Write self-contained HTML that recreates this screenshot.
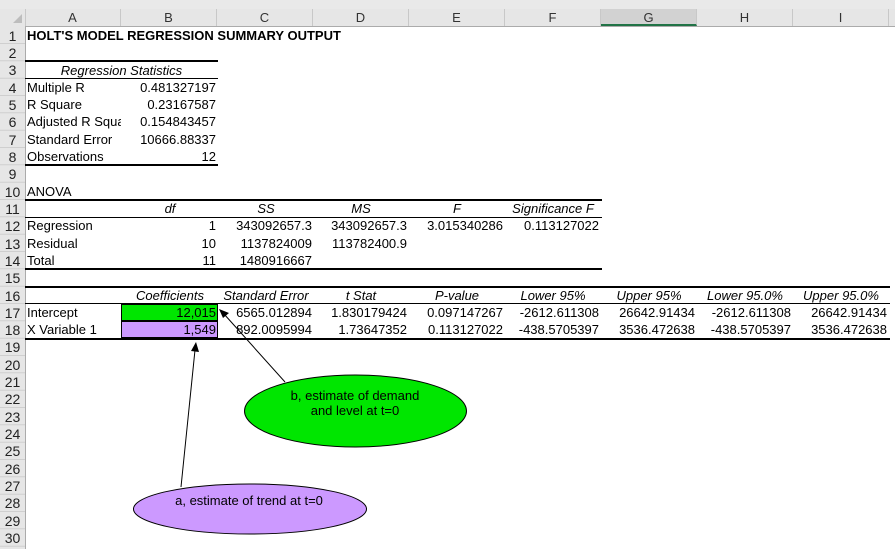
<!DOCTYPE html>
<html><head><meta charset="utf-8"><style>
*{margin:0;padding:0}
html,body{width:895px;height:549px;overflow:hidden}
body{position:relative;background:#fff;font-family:"Liberation Sans",Arial,sans-serif;color:#000}
.c{position:absolute;height:17px;line-height:18px;font-size:13px;white-space:nowrap;overflow:hidden;padding:0 2px;box-sizing:border-box;width:96px}
.r{text-align:right}.m{text-align:center}.i{font-style:italic}
.rn{position:absolute;left:0;width:25px;height:17px;line-height:18px;font-size:14px;text-align:center;background:#e6e6e6;color:#222;box-sizing:border-box}
.ch{position:absolute;top:9px;height:17px;line-height:18px;font-size:13px;text-align:center;color:#333;border-right:1px solid #c8c8c8;box-sizing:border-box;width:96px}
</style></head><body>
<div style="position:absolute;left:0;top:0;width:895px;height:9px;background:#e9e9e9"></div>
<div style="position:absolute;left:0;top:9px;width:895px;height:17px;background:#e6e6e6;border-bottom:1px solid #ababab"></div>
<div style="position:absolute;left:0;top:9px;width:25px;height:17px;border-right:1px solid #c8c8c8"></div>
<div style="position:absolute;left:13px;top:14px;width:0;height:0;border-left:9px solid transparent;border-bottom:9px solid #bdbdbd"></div>
<div class="ch" style="left:25px">A</div><div class="ch" style="left:121px">B</div><div class="ch" style="left:217px">C</div><div class="ch" style="left:313px">D</div><div class="ch" style="left:409px">E</div><div class="ch" style="left:505px">F</div>
<div class="ch" style="left:601px;background:#d2d2d2;border-bottom:2px solid #217346">G</div><div class="ch" style="left:697px">H</div><div class="ch" style="left:793px">I</div>
<div style="position:absolute;left:0;top:26px;width:25px;height:523px;background:#e6e6e6;border-right:1px solid #ababab"></div>
<div class="rn" style="top:26.5px">1</div><div class="rn" style="top:43.8px">2</div><div class="rn" style="top:61.2px">3</div><div class="rn" style="top:78.5px">4</div><div class="rn" style="top:95.8px">5</div><div class="rn" style="top:113.2px">6</div><div class="rn" style="top:130.5px">7</div><div class="rn" style="top:147.8px">8</div><div class="rn" style="top:165.1px">9</div><div class="rn" style="top:182.5px">10</div><div class="rn" style="top:199.8px">11</div><div class="rn" style="top:217.1px">12</div><div class="rn" style="top:234.5px">13</div><div class="rn" style="top:251.8px">14</div><div class="rn" style="top:269.1px">15</div><div class="rn" style="top:286.5px">16</div><div class="rn" style="top:303.8px">17</div><div class="rn" style="top:321.1px">18</div><div class="rn" style="top:338.4px">19</div><div class="rn" style="top:355.8px">20</div><div class="rn" style="top:373.1px">21</div><div class="rn" style="top:390.4px">22</div><div class="rn" style="top:407.8px">23</div><div class="rn" style="top:425.1px">24</div><div class="rn" style="top:442.4px">25</div><div class="rn" style="top:459.8px">26</div><div class="rn" style="top:477.1px">27</div><div class="rn" style="top:494.4px">28</div><div class="rn" style="top:511.8px">29</div><div class="rn" style="top:529.1px">30</div>
<svg style="position:absolute;left:0;top:0" width="25" height="549"><g stroke="#cfcfcf" stroke-width="1">
<path d="M0 43.5H25M0 60.8H25M0 78.2H25M0 95.5H25M0 112.8H25M0 130.2H25M0 147.5H25M0 164.8H25M0 182.2H25M0 199.5H25M0 216.8H25M0 234.2H25M0 251.5H25M0 268.8H25M0 286.2H25M0 303.5H25M0 320.8H25M0 338.2H25M0 355.5H25M0 372.8H25M0 390.2H25M0 407.5H25M0 424.8H25M0 442.2H25M0 459.5H25M0 476.8H25M0 494.2H25M0 511.5H25M0 528.8H25M0 546.2H25"/></g></svg>

<div style="position:absolute;left:121px;top:303.8px;width:97px;height:17.3px;background:#00e600;border:1px solid #000;box-sizing:border-box"></div>
<div style="position:absolute;left:121px;top:321.1px;width:97px;height:17.3px;background:#cc99ff;border:1px solid #000;box-sizing:border-box"></div>

<div style="position:absolute;left:25px;top:60px;width:193px;height:2px;background:#000"></div>
<div style="position:absolute;left:25px;top:78px;width:193px;height:1px;background:#000"></div>
<div style="position:absolute;left:25px;top:163.5px;width:193px;height:2px;background:#000"></div>
<div style="position:absolute;left:25px;top:198.5px;width:577px;height:2px;background:#000"></div>
<div style="position:absolute;left:25px;top:216.5px;width:577px;height:1px;background:#000"></div>
<div style="position:absolute;left:25px;top:267.5px;width:577px;height:2px;background:#000"></div>
<div style="position:absolute;left:25px;top:285.5px;width:865px;height:2px;background:#000"></div>
<div style="position:absolute;left:25px;top:303.3px;width:865px;height:1px;background:#000"></div>
<div style="position:absolute;left:25px;top:337.5px;width:865px;height:2px;background:#000"></div>

<div class="c" style="left:25px;top:26.5px;width:400px;font-weight:bold">HOLT'S MODEL REGRESSION SUMMARY OUTPUT</div>
<div class="c m i" style="left:25px;top:61.5px;width:193px">Regression Statistics</div>
<div class="c" style="left:25px;top:78.5px">Multiple R</div><div class="c r" style="left:122px;top:78.5px">0.481327197</div>
<div class="c" style="left:25px;top:95.8px">R Square</div><div class="c r" style="left:122px;top:95.8px">0.23167587</div>
<div class="c" style="left:25px;top:113.2px">Adjusted R Squa</div><div class="c r" style="left:122px;top:113.2px">0.154843457</div>
<div class="c" style="left:25px;top:130.5px">Standard Error</div><div class="c r" style="left:122px;top:130.5px">10666.88337</div>
<div class="c" style="left:25px;top:147.8px">Observations</div><div class="c r" style="left:122px;top:147.8px">12</div>

<div class="c" style="left:25px;top:182.5px">ANOVA</div>
<div class="c m i" style="left:122px;top:199.8px">df</div><div class="c m i" style="left:218px;top:199.8px">SS</div><div class="c m i" style="left:313px;top:199.8px">MS</div><div class="c m i" style="left:409px;top:199.8px">F</div><div class="c m i" style="left:505px;top:199.8px">Significance F</div>
<div class="c" style="left:25px;top:217.1px">Regression</div><div class="c r" style="left:122px;top:217.1px">1</div><div class="c r" style="left:218px;top:217.1px">343092657.3</div><div class="c r" style="left:313px;top:217.1px">343092657.3</div><div class="c r" style="left:409px;top:217.1px">3.015340286</div><div class="c r" style="left:505px;top:217.1px">0.113127022</div>
<div class="c" style="left:25px;top:234.5px">Residual</div><div class="c r" style="left:122px;top:234.5px">10</div><div class="c r" style="left:218px;top:234.5px">1137824009</div><div class="c r" style="left:313px;top:234.5px">113782400.9</div>
<div class="c" style="left:25px;top:251.8px">Total</div><div class="c r" style="left:122px;top:251.8px">11</div><div class="c r" style="left:218px;top:251.8px">1480916667</div>

<div class="c m i" style="left:122px;top:286.5px">Coefficients</div><div class="c m i" style="left:218px;top:286.5px">Standard Error</div><div class="c m i" style="left:313px;top:286.5px">t Stat</div><div class="c m i" style="left:409px;top:286.5px">P-value</div><div class="c m i" style="left:505px;top:286.5px">Lower 95%</div><div class="c m i" style="left:601px;top:286.5px">Upper 95%</div><div class="c m i" style="left:697px;top:286.5px">Lower 95.0%</div><div class="c m i" style="left:793px;top:286.5px">Upper 95.0%</div>
<div class="c" style="left:25px;top:303.8px">Intercept</div><div class="c r" style="left:122px;top:303.8px">12,015</div><div class="c r" style="left:218px;top:303.8px">6565.012894</div><div class="c r" style="left:313px;top:303.8px">1.830179424</div><div class="c r" style="left:409px;top:303.8px">0.097147267</div><div class="c r" style="left:505px;top:303.8px">-2612.611308</div><div class="c r" style="left:601px;top:303.8px">26642.91434</div><div class="c r" style="left:697px;top:303.8px">-2612.611308</div><div class="c r" style="left:793px;top:303.8px">26642.91434</div>
<div class="c" style="left:25px;top:321.1px">X Variable 1</div><div class="c r" style="left:122px;top:321.1px">1,549</div><div class="c r" style="left:218px;top:321.1px">892.0095994</div><div class="c r" style="left:313px;top:321.1px">1.73647352</div><div class="c r" style="left:409px;top:321.1px">0.113127022</div><div class="c r" style="left:505px;top:321.1px">-438.5705397</div><div class="c r" style="left:601px;top:321.1px">3536.472638</div><div class="c r" style="left:697px;top:321.1px">-438.5705397</div><div class="c r" style="left:793px;top:321.1px">3536.472638</div>

<svg style="position:absolute;left:0;top:0" width="895" height="549">
<line x1="285" y1="382" x2="224" y2="314" stroke="#000" stroke-width="1"/>
<polygon points="219,309 229,313 223,318" fill="#000"/>
<line x1="181" y1="487" x2="195" y2="350" stroke="#000" stroke-width="1"/>
<polygon points="196,342 199,352 191,351" fill="#000"/>
<ellipse cx="355.5" cy="411" rx="111" ry="36" fill="#00e600" stroke="#000" stroke-width="1"/>
<ellipse cx="250" cy="509" rx="116.5" ry="25" fill="#cc99ff" stroke="#000" stroke-width="1"/>
<text x="355" y="400" font-size="13" text-anchor="middle" font-family="Liberation Sans,Arial,sans-serif">b, estimate of demand</text>
<text x="355" y="415" font-size="13" text-anchor="middle" font-family="Liberation Sans,Arial,sans-serif">and level at t=0</text>
<text x="249" y="505" font-size="13" text-anchor="middle" font-family="Liberation Sans,Arial,sans-serif">a, estimate of trend at t=0</text>
</svg>
</body></html>
